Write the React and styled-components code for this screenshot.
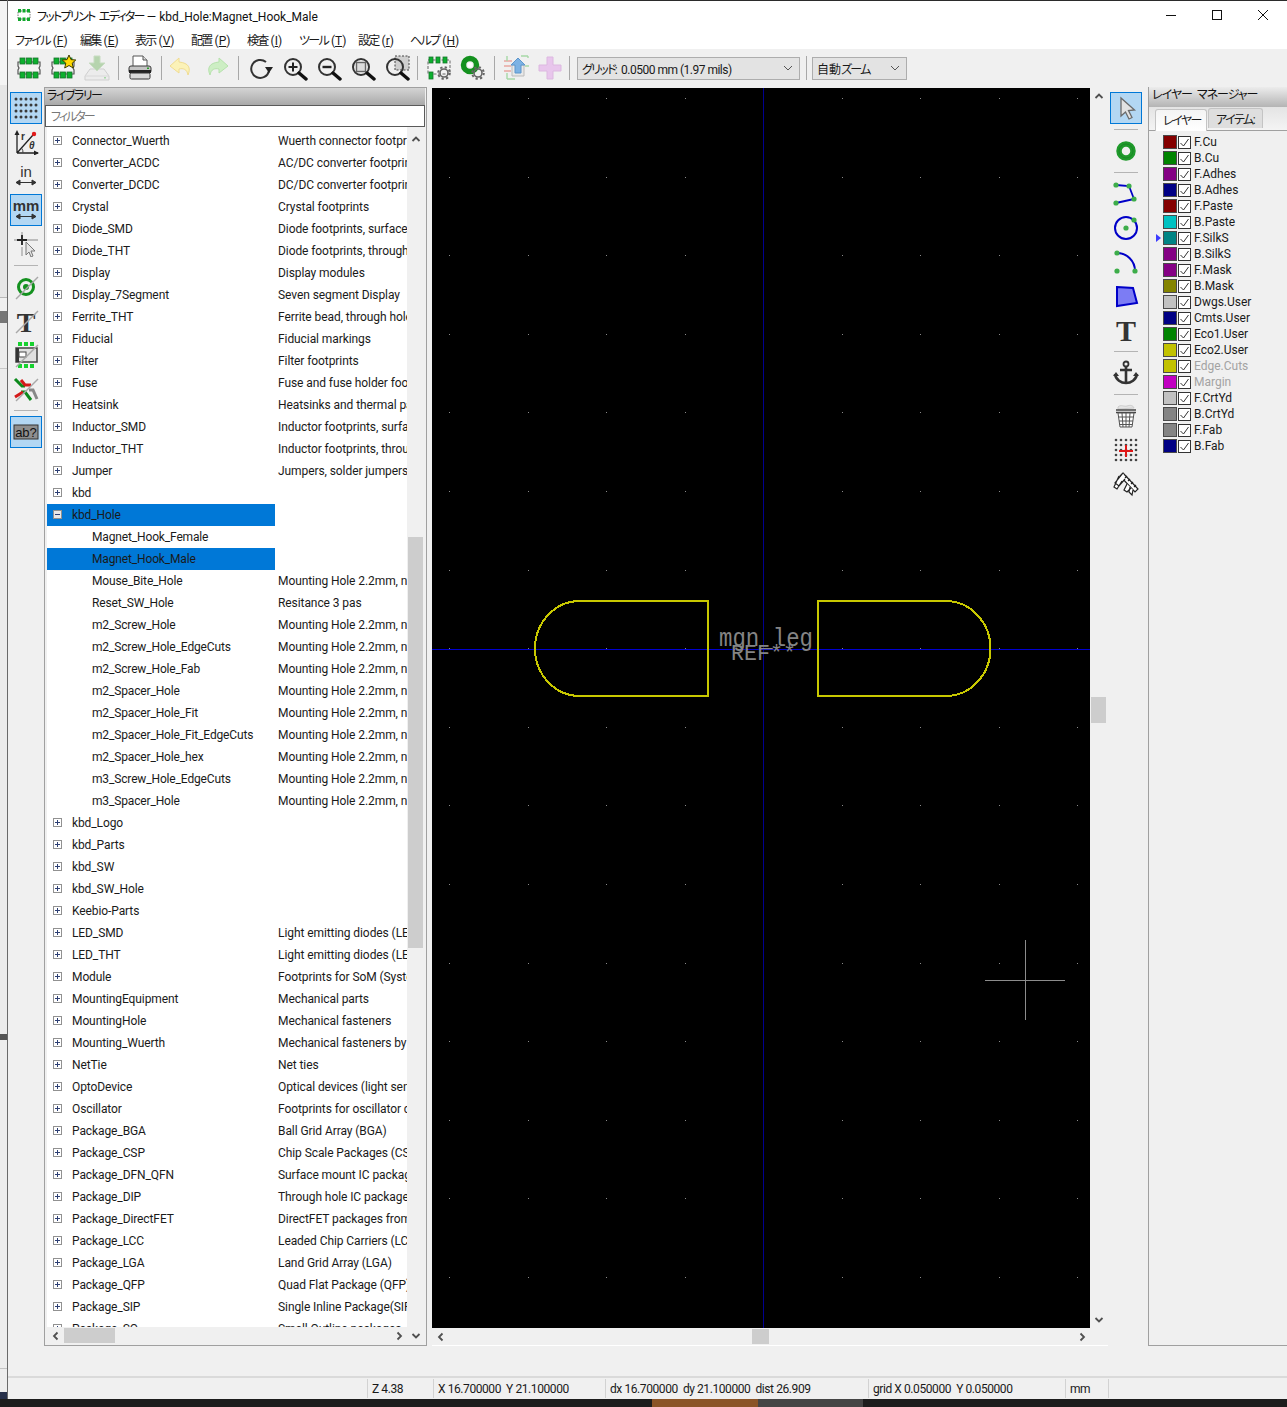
import styled, { createGlobalStyle } from 'styled-components'

const GlobalStyle = createGlobalStyle`
  html, body {
    margin: 0;
    padding: 0;
    background: #1d1d1d;
  }
  body {
    font-family: Roboto, "Noto Sans CJK JP", sans-serif;
    font-size: 12px;
    color: #1a1a1a;
    font-feature-settings: "palt";
  }
  * {
    box-sizing: border-box;
  }
`

//DATA
const LIBRARIES = [
  ['Connector_Wuerth', 'Wuerth connector footprints'],
  ['Converter_ACDC', 'AC/DC converter footprints'],
  ['Converter_DCDC', 'DC/DC converter footprints'],
  ['Crystal', 'Crystal footprints'],
  ['Diode_SMD', 'Diode footprints, surface mount'],
  ['Diode_THT', 'Diode footprints, through hole'],
  ['Display', 'Display modules'],
  ['Display_7Segment', 'Seven segment Display'],
  ['Ferrite_THT', 'Ferrite bead, through hole'],
  ['Fiducial', 'Fiducial markings'],
  ['Filter', 'Filter footprints'],
  ['Fuse', 'Fuse and fuse holder footprints'],
  ['Heatsink', 'Heatsinks and thermal pads'],
  ['Inductor_SMD', 'Inductor footprints, surface mount'],
  ['Inductor_THT', 'Inductor footprints, through hole'],
  ['Jumper', 'Jumpers, solder jumpers, net ties'],
  ['kbd', ''],
  ['kbd_Hole', '', 'open'],
  ['Magnet_Hook_Female', '', 'child'],
  ['Magnet_Hook_Male', '', 'childSelected'],
  ['Mouse_Bite_Hole', 'Mounting Hole 2.2mm, no annular', 'child'],
  ['Reset_SW_Hole', 'Resitance 3 pas', 'child'],
  ['m2_Screw_Hole', 'Mounting Hole 2.2mm, no annular', 'child'],
  ['m2_Screw_Hole_EdgeCuts', 'Mounting Hole 2.2mm, no annular', 'child'],
  ['m2_Screw_Hole_Fab', 'Mounting Hole 2.2mm, no annular', 'child'],
  ['m2_Spacer_Hole', 'Mounting Hole 2.2mm, no annular', 'child'],
  ['m2_Spacer_Hole_Fit', 'Mounting Hole 2.2mm, no annular', 'child'],
  ['m2_Spacer_Hole_Fit_EdgeCuts', 'Mounting Hole 2.2mm, no annular', 'child'],
  ['m2_Spacer_Hole_hex', 'Mounting Hole 2.2mm, no annular', 'child'],
  ['m3_Screw_Hole_EdgeCuts', 'Mounting Hole 2.2mm, no annular', 'child'],
  ['m3_Spacer_Hole', 'Mounting Hole 2.2mm, no annular', 'child'],
  ['kbd_Logo', ''],
  ['kbd_Parts', ''],
  ['kbd_SW', ''],
  ['kbd_SW_Hole', ''],
  ['Keebio-Parts', ''],
  ['LED_SMD', 'Light emitting diodes (LED)'],
  ['LED_THT', 'Light emitting diodes (LED)'],
  ['Module', 'Footprints for SoM (System)'],
  ['MountingEquipment', 'Mechanical parts'],
  ['MountingHole', 'Mechanical fasteners'],
  ['Mounting_Wuerth', 'Mechanical fasteners by Wuerth'],
  ['NetTie', 'Net ties'],
  ['OptoDevice', 'Optical devices (light sensors)'],
  ['Oscillator', 'Footprints for oscillator circuits'],
  ['Package_BGA', 'Ball Grid Array (BGA)'],
  ['Package_CSP', 'Chip Scale Packages (CSP)'],
  ['Package_DFN_QFN', 'Surface mount IC packages'],
  ['Package_DIP', 'Through hole IC packages'],
  ['Package_DirectFET', 'DirectFET packages from IR'],
  ['Package_LCC', 'Leaded Chip Carriers (LCC)'],
  ['Package_LGA', 'Land Grid Array (LGA)'],
  ['Package_QFP', 'Quad Flat Package (QFP)'],
  ['Package_SIP', 'Single Inline Package(SIP)'],
  ['Package_SO', 'Small Outline packages'],
]

const LAYERS = [
  ['F.Cu', '#840000'],
  ['B.Cu', '#008400'],
  ['F.Adhes', '#840084'],
  ['B.Adhes', '#000084'],
  ['F.Paste', '#840000'],
  ['B.Paste', '#00c2c2'],
  ['F.SilkS', '#008484', 'active'],
  ['B.SilkS', '#840084'],
  ['F.Mask', '#840084'],
  ['B.Mask', '#848400'],
  ['Dwgs.User', '#c2c2c2'],
  ['Cmts.User', '#000084'],
  ['Eco1.User', '#008400'],
  ['Eco2.User', '#c2c200'],
  ['Edge.Cuts', '#c2c200', 'dim'],
  ['Margin', '#c200c2', 'dim'],
  ['F.CrtYd', '#c2c2c2'],
  ['B.CrtYd', '#848484'],
  ['F.Fab', '#848484'],
  ['B.Fab', '#000084'],
]

const MENUS = [
  ['ファイル', 'F', 65],
  ['編集', 'E', 55],
  ['表示', 'V', 56],
  ['配置', 'P', 56],
  ['検査', 'I', 52],
  ['ツール', 'T', 59],
  ['設定', 'r', 52],
  ['ヘルプ', 'H', 60],
]

const STATUS = [
  ['', 360],
  ['Z 4.38', 66],
  ['X 16.700000  Y 21.100000', 172],
  ['dx 16.700000  dy 21.100000  dist 26.909', 263],
  ['grid X 0.050000  Y 0.050000', 197],
  ['mm', 43],
]

//STYLES
const Page = styled.div`
  width: 1287px;
  height: 1407px;
  display: grid;
  grid-template-columns: 8px 1fr;
  grid-template-rows: 1399px 8px;
  overflow: hidden;
  background: #1d1d1d;
`
const DesktopEdge = styled.div`
  border-right: 1px solid #6a6a6a;
  background: linear-gradient(
    #2b2b2b 0 1px,
    #f4f4f4 1px 85px,
    #e6e6e6 85px 297px,
    #b8b8b8 297px 298px,
    #f0f0f0 298px 311px,
    #777 311px 323px,
    #ececec 323px 368px,
    #c8c8c8 368px 369px,
    #ececec 369px 1034px,
    #555 1034px 1040px,
    #ededed 1040px 1368px,
    #c4c4c4 1368px 1369px,
    #ededed 1369px 1392px,
    #27304a 1392px
  );
`
const Window = styled.div`
  display: flex;
  flex-direction: column;
  min-width: 0;
  background: #f0f0f0;
  border-top: 1px solid #2b2b2b;
`
const Taskbar = styled.div`
  grid-column: 1 / 3;
  display: flex;
  padding-left: 652px;
  background: #1d1d1d;
`
const TaskItem = styled.div`
  width: ${(p) => p.$w}px;
  background: ${(p) => p.$bg};
`
const Kana = styled.span`
  letter-spacing: ${(p) => p.$ls ?? -1.7}px;
  word-spacing: 3px;
`
const Tight = styled.span`
  margin-left: 2px;
  letter-spacing: -0.5px;
`
const TitleBar = styled.div`
  height: 29px;
  display: flex;
  align-items: center;
  padding: 0 1px 1px 9px;
  background: #fff;
  color: #111;
`
const TitleText = styled.span`
  margin-left: 6px;
  flex: 1;
  white-space: pre;
`
const WindowButton = styled.div`
  width: 46px;
  height: 28px;
  display: flex;
  align-items: center;
  justify-content: center;
`
const MenuBar = styled.div`
  height: 19px;
  display: flex;
  align-items: center;
  padding-left: 7px;
  background: #fff;
`
const MenuItem = styled.div`
  width: ${(p) => p.$w}px;
  white-space: pre;
  u {
    text-underline-offset: 1px;
  }
`
const TopToolbar = styled.div`
  height: 38px;
  display: flex;
  align-items: center;
  padding-left: 4px;
`
const TopButton = styled.div`
  width: 34px;
  height: 32px;
  display: flex;
  align-items: center;
  justify-content: center;
  flex: none;
`
const VSep = styled.div`
  width: 1px;
  height: 24px;
  flex: none;
  background: #a8a8a8;
  margin: 0 ${(p) => p.$r ?? 4}px 0 ${(p) => p.$l ?? 4}px;
`
const Combo = styled.div`
  width: ${(p) => p.$w}px;
  height: 23px;
  flex: none;
  display: flex;
  align-items: center;
  justify-content: space-between;
  padding: 0 6px 0 4px;
  background: #e3e3e3;
  border: 1px solid #adadad;
  white-space: pre;
`
const Body = styled.div`
  height: 1259px;
  display: flex;
`
const ToolStrip = styled.div`
  width: 36px;
  flex: none;
  display: flex;
  flex-direction: column;
  align-items: center;
  gap: 2px;
  padding-top: 5px;
`
const ToolButton = styled.div`
  width: 32px;
  height: 32px;
  flex: none;
  display: flex;
  align-items: center;
  justify-content: center;
  border: 1px solid ${(p) => (p.$active ? '#0078d7' : 'transparent')};
  background: ${(p) => (p.$active ? '#b3d7f3' : 'transparent')};
`
const HSep = styled.div`
  width: 24px;
  height: 1px;
  flex: none;
  background: #b4b4b4;
  margin: 3px 0;
`
const LibraryPanel = styled.div`
  width: 383px;
  height: 1259px;
  flex: none;
  display: flex;
  flex-direction: column;
  padding: 0 1px 1px 0;
  border: 1px solid #a0a0a0;
`
const PanelTitle = styled.div`
  height: ${(p) => p.$h}px;
  flex: none;
  display: flex;
  align-items: center;
  padding: 0 0 ${(p) => p.$pb ?? 4}px ${(p) => p.$pl ?? 2}px;
  background: linear-gradient(#d4d4d4, #a9a9a9);
  color: #111;
  white-space: pre;
`
const FilterInput = styled.div`
  height: 22px;
  flex: none;
  display: flex;
  align-items: center;
  padding: 0 0 1px 5px;
  background: #fff;
  border: 1px solid #5a5a5a;
  color: #777;
`
const TreeArea = styled.div`
  flex: 1;
  min-height: 0;
  display: flex;
  padding-left: 2px;
`
const TreeColumn = styled.div`
  width: 360px;
  height: 100%;
  display: flex;
  flex-direction: column;
`
const Tree = styled.div`
  flex: 1;
  min-height: 0;
  overflow: hidden;
  padding-top: 3px;
  background: #fff;
`
const TreeRow = styled.div`
  height: 22px;
  display: flex;
  align-items: center;
`
const NameCell = styled.div`
  width: 228px;
  height: 22px;
  flex: none;
  display: flex;
  align-items: center;
  padding: 0 0 1px ${(p) => (p.$child ? 45 : 6)}px;
  letter-spacing: ${(p) => (p.$child ? -0.15 : -0.1)}px;
  background: ${(p) => (p.$selected ? '#0078d7' : 'transparent')};
  white-space: nowrap;
`
const DescCell = styled.div`
  width: 132px;
  padding: 0 0 1px 3px;
  letter-spacing: -0.08px;
  overflow: hidden;
  white-space: nowrap;
`
const Expander = styled.span`
  width: 9px;
  height: 9px;
  flex: none;
  margin-right: 10px;
  display: flex;
  align-items: center;
  justify-content: center;
  background: ${(p) => (p.$open ? '#e8e8e8' : '#fff')};
  border: 1px solid #919191;
  &::before {
    content: '';
    width: 5px;
    height: 1px;
    background: #2d3f74;
  }
  &::after {
    content: '';
    display: ${(p) => (p.$open ? 'none' : 'block')};
    width: 1px;
    height: 5px;
    margin-left: -3px;
    margin-right: 2px;
    background: #2d3f74;
  }
`
const VScroll = styled.div`
  width: 17px;
  flex: none;
  display: flex;
  flex-direction: column;
  padding-top: ${(p) => p.$top ?? 0}px;
  background: #f0f0f0;
`
const HScroll = styled.div`
  height: 17px;
  flex: none;
  display: flex;
  background: #f0f0f0;
`
const ArrowBox = styled.div`
  width: 17px;
  height: 17px;
  flex: none;
  display: flex;
  align-items: center;
  justify-content: center;
`
const VTrack = styled.div`
  flex: 1;
  min-height: 0;
  padding: ${(p) => p.$offset}px 1px 0;
`
const VThumb = styled.div`
  height: ${(p) => p.$size}px;
  background: #cdcdcd;
`
const HTrack = styled.div`
  flex: 1;
  min-width: 0;
  padding: 1px 0 1px ${(p) => p.$offset}px;
`
const HThumb = styled.div`
  width: ${(p) => p.$size}px;
  height: 100%;
  background: #cdcdcd;
`
const CanvasArea = styled.div`
  width: 676px;
  flex: none;
  margin-left: 5px;
  padding-top: 1px;
  height: 1259px;
  display: grid;
  grid-template-columns: 658px 18px;
  grid-template-rows: 1240px 17px;
  border-bottom: 1px solid #fff;
`
const CanvasSvg = styled.svg`
  display: block;
  background: #000;
`
const LayerPanel = styled.div`
  width: 139px;
  flex: none;
  margin-left: 4px;
  height: 1259px;
  display: flex;
  flex-direction: column;
  border-left: 1px solid #a0a0a0;
  border-bottom: 1px solid #a0a0a0;
`
const LayerTitle = styled(PanelTitle)`
  background: linear-gradient(#ececec, #b4b4b4);
`
const TabBar = styled.div`
  height: 24px;
  flex: none;
  display: flex;
  align-items: flex-end;
  padding-left: 6px;
  border-bottom: 1px solid #a0a0a0;
  background: linear-gradient(#e4e4e4, #f4f4f4);
`
const Tab = styled.div`
  width: ${(p) => p.$w}px;
  height: ${(p) => (p.$active ? 22 : 20)}px;
  display: flex;
  align-items: center;
  padding: 0 0 ${(p) => (p.$active ? 3 : 0)}px 7px;
  margin-right: 1px;
  margin-bottom: ${(p) => (p.$active ? -1 : 2)}px;
  border: 1px solid #c4c4c4;
  border-bottom: none;
  border-radius: 3px 3px 0 0;
  white-space: nowrap;
  background: ${(p) => (p.$active ? 'linear-gradient(#f4f4f4, #fff)' : '#dedede')};
`
const LayerList = styled.div`
  padding-top: 3px;
`
const LayerRow = styled.div`
  height: 16px;
  display: flex;
  align-items: center;
  padding-left: 7px;
  color: ${(p) => (p.$dim ? '#a3a3a3' : '#1a1a1a')};
`
const Marker = styled.span`
  width: 7px;
  flex: none;
  height: 0;
  border-left: 5px solid ${(p) => (p.$on ? '#3b3bff' : 'transparent')};
  border-top: 4px solid transparent;
  border-bottom: 4px solid transparent;
`
const Swatch = styled.span`
  width: 14px;
  height: 14px;
  flex: none;
  background: ${(p) => p.$color};
  border: 1px solid #4a4a4a;
`
const CheckBox = styled.span`
  width: 13px;
  height: 13px;
  flex: none;
  margin: 0 3px 0 1px;
  display: flex;
  align-items: center;
  justify-content: center;
  background: #fff;
  border: 1px solid #333;
`
const BlankBand = styled.div`
  height: 30px;
`
const StatusBar = styled.div`
  height: 23px;
  display: flex;
  border-top: 2px solid #dadada;
`
const StatusCell = styled.div`
  width: ${(p) => p.$w}px;
  flex: none;
  display: flex;
  align-items: center;
  padding-left: 4px;
  letter-spacing: -0.42px;
  white-space: pre;
  border-right: 1px solid #d2d2d2;
  margin: 1px 0;
`

//ICONS
const Ico = ({ size = 26, children }) => (
  <svg width={size} height={size} viewBox="0 0 26 26">
    {children}
  </svg>
)

const Pad = ({ x, y, w = 5, h = 6 }) => (
  <rect x={x} y={y} width={w} height={h} fill="#0cb02e" stroke="#17742c" strokeWidth="0.8" />
)

const Footprint = () => (
  <>
    <path d="M2 7h22v4l-1 2 1 2v4H2v-4l1-2-1-2z" fill="#f4f4f4" stroke="#555" strokeWidth="1.2" />
    {[4, 10.5, 17].map((x) => (
      <g key={x}>
        <Pad x={x} y={3} />
        <Pad x={x} y={17} />
      </g>
    ))}
  </>
)

const Gear = ({ x, y }) => (
  <g fill="none" stroke="#666">
    <circle cx={x} cy={y} r="4" strokeWidth="1.6" />
    <circle cx={x} cy={y} r="5.8" strokeWidth="2" strokeDasharray="2.3 2.25" />
  </g>
)

const Magnifier = ({ children }) => (
  <g transform="translate(-1 0)">
    <circle cx="11" cy="12" r="8" fill="none" stroke="#333" strokeWidth="2" />
    <path d="M17 18l7 6" stroke="#111" strokeWidth="3.4" strokeLinecap="round" />
    {children}
  </g>
)

const Slash = () => <path d="M3 25L25 3" stroke="#a8a8a8" strokeWidth="1.4" />

const FootprintIcon = () => (
  <Ico>
    <Footprint />
  </Ico>
)
const FootprintNewIcon = () => (
  <Ico>
    <Footprint />
    <path
      d="M19 0l2 4.6 4.8.4-3.6 3.2 1.1 4.8-4.3-2.5-4.300 2.500 1.100-4.800L12.200 5l4.800-.4z"
      fill="#ffd800"
      stroke="#3d3d00"
      strokeWidth="1"
    />
  </Ico>
)
const ImportIcon = () => (
  <Ico>
    <path d="M6 14h14l5 7v4H1v-4z" fill="#ececec" stroke="#cfcfcf" />
    <path d="M1 21h24" stroke="#d8d8d8" />
    <rect x="20" y="22" width="2" height="1.500" fill="#a8d8a8" />
    <path d="M10 1h6v7h5l-8 8-8-8h5z" fill="#b6d4ae" stroke="#c8dcc2" />
  </Ico>
)
const PrintIcon = () => (
  <Ico>
    <path d="M6 1h10l4 4v7H6z" fill="#fff" stroke="#555" />
    <path d="M16 1v4h4" fill="#ddd" stroke="#555" />
    <rect x="2" y="11" width="22" height="7" rx="2" fill="#c4c4c4" stroke="#3a3a3a" />
    <rect x="2" y="15" width="22" height="3" fill="#222" />
    <rect x="3" y="18" width="20" height="6" rx="1.500" fill="#d8d8d8" stroke="#333" />
    <rect x="20" y="12.500" width="2" height="1.500" fill="#2a9d2a" />
  </Ico>
)
const UndoIcon = () => (
  <Ico>
    <g transform="translate(-2 0)">
      <path d="M11 3L2 11l9 7v-4c4-1 8 0 9 6 3-7 1-12-9-13z" fill="#fbf2b8" stroke="#f0dc90" strokeWidth="1" />
    </g>
  </Ico>
)
const RedoIcon = () => (
  <Ico>
    <path d="M15 3l9 8-9 7v-4c-4-1-8 0-9 6-3-7-1-12 9-13z" fill="#cdeec4" stroke="#b6e2ac" strokeWidth="1" />
  </Ico>
)
const RefreshIcon = () => (
  <Ico>
    <g transform="translate(-2 0)">
      <path d="M19 7A9 9 0 1 0 22 16" fill="none" stroke="#333" strokeWidth="2" />
      <path d="M18 12h8l-4 6z" fill="#222" />
    </g>
  </Ico>
)
const ZoomInIcon = () => (
  <Ico>
    <Magnifier>
      <path d="M6.500 12h9M11 7.500v9" stroke="#222" strokeWidth="2" />
    </Magnifier>
  </Ico>
)
const ZoomOutIcon = () => (
  <Ico>
    <Magnifier>
      <path d="M6.500 12h9" stroke="#222" strokeWidth="2.400" />
    </Magnifier>
  </Ico>
)
const ZoomFitIcon = () => (
  <Ico>
    <Magnifier>
      <rect x="6.500" y="7.500" width="9" height="9" fill="#ddd" stroke="#666" strokeWidth="1.400" />
    </Magnifier>
  </Ico>
)
const ZoomAreaIcon = () => (
  <Ico>
    <rect x="10" y="1" width="14" height="14" fill="#cfcfcf" stroke="#444" strokeDasharray="2 1.500" />
    <Magnifier />
  </Ico>
)
const FootprintGearIcon = () => (
  <Ico>
    <path d="M2 5h22v14H2z" fill="#f4f4f4" stroke="#666" strokeDasharray="3 1.500" />
    <Pad x={3} y={2} w={4} h={6} />
    <Pad x={10} y={2} w={4} h={6} />
    <Pad x={17} y={2} w={4} h={6} />
    <Pad x={3} y={17} w={4} h={7} />
    <Gear x={18} y={18} />
  </Ico>
)
const PadGearIcon = () => (
  <Ico>
    <circle cx="10" cy="10" r="6.500" fill="none" stroke="#14911f" strokeWidth="5.500" />
    <circle cx="10" cy="10" r="2.500" fill="#fff" />
    <Gear x={18} y={18} />
  </Ico>
)
const UpdateIcon = () => (
  <Ico>
    <path d="M1 6h8M1 11h7M1 16h7" stroke="#e8a6a0" strokeWidth="1.400" />
    <path d="M4 1v5M18 1h7M25 1v2M4 24V18M4 24h8M22 11h4" stroke="#a6d8a6" strokeWidth="1.400" />
    <path d="M9 10h12v11H9z" fill="#e8e8e8" stroke="#bbb" />
    <path d="M15 3l7 7h-4v8h-6v-8H8z" fill="#7cb2e4" stroke="#5d96cc" />
  </Ico>
)
const PlusIcon = () => (
  <Ico>
    <path d="M10 2h6v8h8v6h-8v8h-6v-8H2v-6h8z" fill="#e8c6ec" stroke="#dcb8e0" />
  </Ico>
)
const GridIcon = () => (
  <Ico>
    {[3, 8, 13, 18, 23].map((x) =>
      [4, 10, 16, 22].map((y) => <circle key={`${x}-${y}`} cx={x} cy={y} r="1.500" fill="#3a3a3a" />),
    )}
  </Ico>
)
const PolarIcon = () => (
  <Ico>
    <path d="M4 24h21M4 24V4M4 24L20 6" stroke="#222" strokeWidth="1.300" fill="none" />
    <path d="M4 1l-2.500 5h5zM26 24l-5-2.500v5z" fill="#222" />
    <circle cx="21" cy="5" r="2.200" fill="#e21b1b" />
    <path d="M10 24a7 7 0 0 0-1.500-5" stroke="#444" fill="none" />
    <text x="8" y="11" fontFamily="Liberation Sans" fontSize="10" fontWeight="700" fill="#333">
      r
    </text>
    <text x="16" y="20" fontFamily="Liberation Sans" fontSize="10" fontStyle="italic" fontWeight="700" fill="#333">
      θ
    </text>
  </Ico>
)
const UnitArrow = () => (
  <path d="M3 19.500h20M3 19.500l4-2.500v5zM23 19.500l-4-2.500v5z" stroke="#333" strokeWidth="1" fill="#333" />
)
const InchIcon = () => (
  <Ico>
    <text x="13" y="14" textAnchor="middle" fontFamily="Liberation Sans" fontSize="15" fill="#333">
      in
    </text>
    <UnitArrow />
  </Ico>
)
const MmIcon = () => (
  <Ico>
    <text x="13" y="14" textAnchor="middle" fontFamily="Liberation Sans" fontSize="15" fontWeight="700" fill="#333">
      mm
    </text>
    <UnitArrow />
  </Ico>
)
const CrossCursorIcon = () => (
  <Ico>
    <path d="M1 9h24M9 1v12" stroke="#aaa" strokeWidth="1.400" />
    <path d="M4 9h10M9 4v10" stroke="#222" strokeWidth="1.800" />
    <path d="M9 16v9" stroke="#aaa" strokeWidth="1.400" />
    <path d="M13 11v13l3-3 2 5 2-1-2-5h4z" fill="#e6e6e6" stroke="#777" />
  </Ico>
)
const PadOffIcon = () => (
  <Ico>
    <circle cx="13" cy="13" r="7.500" fill="none" stroke="#14911f" strokeWidth="3" />
    <circle cx="13" cy="13" r="3" fill="#14911f" />
    <Slash />
  </Ico>
)
const SerifT = ({ size, x, y }) => (
  <text x={x} y={y} textAnchor="middle" fontFamily="Liberation Serif" fontSize={size} fontWeight="700" fill="#333">
    T
  </text>
)
const TextOffIcon = () => (
  <Ico>
    <SerifT size={28} x={13} y={24} />
    <Slash />
  </Ico>
)
const ModuleOffIcon = () => (
  <Ico>
    {[5, 11, 17].map((x) => (
      <g key={x}>
        <rect x={x} y="0" width="4" height="4" fill="#17d12f" />
        <rect x={x} y="22" width="4" height="4" fill="#17d12f" />
      </g>
    ))}
    <rect x="3" y="6" width="21" height="14" fill="#e0e0e0" stroke="#444" strokeWidth="1.500" />
    <path d="M3 6h3v14H3z" fill="#333" />
    <rect x="6" y="10" width="7" height="5" fill="#fff" stroke="#444" />
    <Slash />
  </Ico>
)
const TracksOffIcon = () => (
  <Ico>
    <path d="M2 3l7 7h3M8 16h4l6 8" fill="none" stroke="#0c8a1c" strokeWidth="3" />
    <path d="M8 4l4 5h6M2 21l8-5" fill="none" stroke="#d41a1a" strokeWidth="3" />
    <path d="M16 14h4l4 9" fill="none" stroke="#888" strokeWidth="3" />
    <Slash />
  </Ico>
)
const LabelIcon = () => (
  <Ico>
    <rect x="1" y="6" width="24" height="14" fill="#8e8e8e" stroke="#333" />
    <text x="13" y="17.500" textAnchor="middle" fontFamily="Liberation Sans" fontSize="13" fill="#111">
      ab?
    </text>
  </Ico>
)
const ArrowIcon = () => (
  <Ico>
    <path d="M8 3v18l4.500-4 3.500 7 3-1.500-3.500-7 6-.5z" fill="#e2e2e2" stroke="#6a6a6a" strokeWidth="1.300" />
  </Ico>
)
const PadIcon = () => (
  <Ico>
    <circle cx="13" cy="13" r="7" fill="none" stroke="#1f9a2b" strokeWidth="5.500" />
    <circle cx="13" cy="13" r="7" fill="none" stroke="#147a20" strokeWidth="0.600" />
    <circle cx="13" cy="13" r="2.500" fill="#f0f0f0" />
  </Ico>
)
const Node = ({ x, y }) => <circle cx={x} cy={y} r="2.600" fill="#3dad4a" />
const SegmentIcon = () => (
  <Ico>
    <path d="M3 4l13 1 5 13-18 4" fill="none" stroke="#0000c8" strokeWidth="1.800" />
    <Node x={3} y={4} />
    <Node x={16} y={5} />
    <Node x={21} y={18} />
    <Node x={3} y={22} />
  </Ico>
)
const CircleIcon = () => (
  <Ico>
    <circle cx="13" cy="13" r="11" fill="none" stroke="#0000c8" strokeWidth="2" />
    <Node x={13} y={13} />
    <Node x={21} y={5} />
  </Ico>
)
const ArcIcon = () => (
  <Ico>
    <path d="M4 4c10 0 18 8 18 18" fill="none" stroke="#0000c8" strokeWidth="2" />
    <Node x={4} y={4} />
    <Node x={4} y={22} />
    <Node x={22} y={22} />
  </Ico>
)
const PolygonIcon = () => (
  <Ico>
    <path d="M4 4l16 1 4 15-20 3z" fill="#7c7cf4" stroke="#0000c8" strokeWidth="2" />
  </Ico>
)
const BigTIcon = () => (
  <Ico>
    <SerifT size={30} x={13} y={24} />
  </Ico>
)
const AnchorIcon = () => (
  <Ico>
    <circle cx="13" cy="4" r="2.500" fill="none" stroke="#333" strokeWidth="1.800" />
    <path d="M13 6v17M7 10h12" stroke="#333" strokeWidth="2.600" />
    <path d="M2 14c1 6 6 9 11 9s10-3 11-9" fill="none" stroke="#333" strokeWidth="2.600" />
    <path d="M0 16l3-4 3 4zM20 16l3-4 3 4z" fill="#333" />
  </Ico>
)
const TrashIcon = () => (
  <Ico>
    <path d="M5 4c3-3 6 0 9-1s6-1 7 2l-16 1z" fill="#e4e4e4" stroke="#ccc" />
    <path d="M3 7h20M3 9.500h20" stroke="#444" strokeWidth="1.400" />
    <path
      d="M5 10l2 14h12l2-14zM5.500 14h15M6 18h14M6.500 21.500h13M9 10l1 14M13 10v14M17 10l-1 14"
      fill="#fff"
      stroke="#555"
    />
  </Ico>
)
const OriginIcon = () => (
  <Ico>
    {[3, 8, 13, 18, 23].map((x) =>
      [3, 8, 13, 18, 23].map((y) => <circle key={`${x}-${y}`} cx={x} cy={y} r="1.300" fill="#444" />),
    )}
    <path d="M6 14h14M13 8v12" stroke="#e01818" strokeWidth="2" />
  </Ico>
)
const CaliperIcon = () => (
  <Ico>
    <g stroke="#222" strokeWidth="1.200">
      <path d="M10 2L25 18l-3 3L7 5z" fill="#fff" />
      <path d="M10 2L2 12l4 3 6-7M6 5L1 16l3 2 5-8" fill="#fff" />
      <path d="M14 13l-3 6 3 2 4-4M17 16l-1 5 3 3 1-5" fill="#fff" />
      <path d="M12 7l2-2M15 10l2-2M18 13l2-2M21 16l2-2" />
    </g>
  </Ico>
)
const AppIcon = () => (
  <svg width="14" height="14" viewBox="0 0 14 14">
    <rect x="1" y="3" width="12" height="8" fill="none" stroke="#777" strokeDasharray="1.500 1" />
    {[1, 5.500, 10].map((x) => (
      <g key={x}>
        <rect x={x} y="1" width="3" height="3.500" fill="#12a82c" />
        <rect x={x} y="9.500" width="3" height="3.500" fill="#12a82c" />
      </g>
    ))}
  </svg>
)
const Chevron = ({ dir }) => {
  const paths = {
    up: 'M1.500 6L5 2.500 8.500 6',
    down: 'M1.500 3L5 6.500 8.500 3',
    left: 'M6.500 1.500L3 5l3.500 3.500',
    right: 'M3.500 1.500L7 5 3.500 8.500',
  }
  return (
    <svg width="10" height="10" viewBox="0 0 10 10">
      <path d={paths[dir]} fill="none" stroke="#505050" strokeWidth="1.800" />
    </svg>
  )
}
const ComboArrow = () => (
  <svg width="10" height="6" viewBox="0 0 10 6">
    <path d="M1 1l4 4 4-4" fill="none" stroke="#555" strokeWidth="1" />
  </svg>
)

//CANVAS
const range = (from, to, step) => {
  const out = []
  for (let v = from; v <= to; v += step) out.push(v)
  return out
}

const PcbCanvas = () => (
  <CanvasSvg width="658" height="1240" viewBox="432 88 658 1240">
    {range(449, 1085, 78.5).map((x) =>
      range(98, 1325, 78.6).map((y) => (
        <rect key={`${x}-${y}`} x={Math.round(x)} y={Math.round(y)} width="1" height="1" fill="#8a8a8a" />
      )),
    )}
    <rect x="763" y="88" width="1" height="1240" fill="#000090" />
    <rect x="432" y="649" width="658" height="1" fill="#0000d0" />
    <path
      d="M580 601H708V696H580A45 47.500 0 0 1 580 601ZM945.500 601H818V696H945.500A45 47.500 0 0 0 945.500 601Z"
      fill="none"
      stroke="#c8c800"
      strokeWidth="2"
      shapeRendering="crispEdges"
    />
    <text x="719" y="646" fontFamily="Liberation Mono" fontSize="25" fill="#848484" textLength="94" lengthAdjust="spacingAndGlyphs">
      mgn_leg
    </text>
    <text x="731" y="660" fontFamily="Liberation Mono" fontSize="22" fill="#848484" textLength="65" lengthAdjust="spacingAndGlyphs">
      REF**
    </text>
    <path d="M985 980.500H1065M1025.500 940V1020" stroke="#8c8c8c" fill="none" />
  </CanvasSvg>
)

//PARTS
const VBar = ({ top, offset, size }) => (
  <VScroll $top={top}>
    <ArrowBox>
      <Chevron dir="up" />
    </ArrowBox>
    <VTrack $offset={offset}>
      <VThumb $size={size} />
    </VTrack>
    <ArrowBox>
      <Chevron dir="down" />
    </ArrowBox>
  </VScroll>
)

const HBar = ({ offset, size }) => (
  <HScroll>
    <ArrowBox>
      <Chevron dir="left" />
    </ArrowBox>
    <HTrack $offset={offset}>
      <HThumb $size={size} />
    </HTrack>
    <ArrowBox>
      <Chevron dir="right" />
    </ArrowBox>
  </HScroll>
)

const LibraryRow = ({ name, desc, kind }) => {
  const isChild = kind === 'child' || kind === 'childSelected'
  return (
    <TreeRow>
      <NameCell $child={isChild} $selected={kind === 'open' || kind === 'childSelected'}>
        {!isChild && <Expander $open={kind === 'open'} />}
        {name}
      </NameCell>
      <DescCell>{desc}</DescCell>
    </TreeRow>
  )
}

function App() {
  return (
    <Page>
      <GlobalStyle />
      <DesktopEdge />
      <Window>
        <TitleBar>
          <AppIcon />
          <TitleText>
            <Kana>フットプリント エディター</Kana> — kbd_Hole:Magnet_Hook_Male
          </TitleText>
          <WindowButton>
            <svg width="10" height="10" viewBox="0 0 10 10">
              <path d="M0 5.500h10" stroke="#111" />
            </svg>
          </WindowButton>
          <WindowButton>
            <svg width="10" height="10" viewBox="0 0 10 10">
              <rect x="0.500" y="0.500" width="9" height="9" fill="none" stroke="#111" />
            </svg>
          </WindowButton>
          <WindowButton>
            <svg width="10" height="10" viewBox="0 0 10 10">
              <path d="M0 0l10 10M10 0L0 10" stroke="#111" />
            </svg>
          </WindowButton>
        </TitleBar>
        <MenuBar>
          {MENUS.map(([label, key, width]) => (
            <MenuItem key={key} $w={width}>
              <Kana>{label}</Kana> (<u>{key}</u>)
            </MenuItem>
          ))}
        </MenuBar>
        <TopToolbar>
          <TopButton><FootprintIcon /></TopButton>
          <TopButton><FootprintNewIcon /></TopButton>
          <TopButton><ImportIcon /></TopButton>
          <VSep />
          <TopButton><PrintIcon /></TopButton>
          <VSep />
          <TopButton><UndoIcon /></TopButton>
          <TopButton><RedoIcon /></TopButton>
          <VSep $r={6} />
          <TopButton><RefreshIcon /></TopButton>
          <TopButton><ZoomInIcon /></TopButton>
          <TopButton><ZoomOutIcon /></TopButton>
          <TopButton><ZoomFitIcon /></TopButton>
          <TopButton><ZoomAreaIcon /></TopButton>
          <VSep $l={2} />
          <TopButton><FootprintGearIcon /></TopButton>
          <TopButton><PadGearIcon /></TopButton>
          <VSep />
          <TopButton><UpdateIcon /></TopButton>
          <TopButton><PlusIcon /></TopButton>
          <VSep $l={2} $r={7} />
          <Combo $w={223}>
            <span>
              <Kana>グリッド:</Kana> <Tight>0.0500 mm (1.97 mils)</Tight>
            </span>
            <ComboArrow />
          </Combo>
          <VSep $l={6} $r={5} />
          <Combo $w={95}>
            <span>
              自動<Kana>ズーム</Kana>
            </span>
            <ComboArrow />
          </Combo>
        </TopToolbar>
        <Body>
          <ToolStrip>
            <ToolButton $active><GridIcon /></ToolButton>
            <ToolButton><PolarIcon /></ToolButton>
            <ToolButton><InchIcon /></ToolButton>
            <ToolButton $active><MmIcon /></ToolButton>
            <ToolButton><CrossCursorIcon /></ToolButton>
            <HSep />
            <ToolButton><PadOffIcon /></ToolButton>
            <ToolButton><TextOffIcon /></ToolButton>
            <ToolButton><ModuleOffIcon /></ToolButton>
            <ToolButton><TracksOffIcon /></ToolButton>
            <HSep />
            <ToolButton $active><LabelIcon /></ToolButton>
          </ToolStrip>
          <LibraryPanel>
            <PanelTitle $h={17}>
              <Kana $ls={-1.5}>ライブラリー</Kana>
            </PanelTitle>
            <FilterInput>
              <Kana $ls={-2}>フィルター</Kana>
            </FilterInput>
            <TreeArea>
              <TreeColumn>
                <Tree>
                  {LIBRARIES.map(([name, desc, kind]) => (
                    <LibraryRow key={name} name={name} desc={desc} kind={kind} />
                  ))}
                </Tree>
                <HBar offset={0} size={51} />
              </TreeColumn>
              <VBar top={4} offset={389} size={411} />
            </TreeArea>
          </LibraryPanel>
          <CanvasArea>
            <PcbCanvas />
            <VBar offset={592} size={26} />
            <HBar offset={303} size={17} />
          </CanvasArea>
          <ToolStrip>
            <ToolButton $active><ArrowIcon /></ToolButton>
            <HSep />
            <ToolButton><PadIcon /></ToolButton>
            <HSep />
            <ToolButton><SegmentIcon /></ToolButton>
            <ToolButton><CircleIcon /></ToolButton>
            <ToolButton><ArcIcon /></ToolButton>
            <ToolButton><PolygonIcon /></ToolButton>
            <ToolButton><BigTIcon /></ToolButton>
            <HSep />
            <ToolButton><AnchorIcon /></ToolButton>
            <HSep />
            <ToolButton><TrashIcon /></ToolButton>
            <ToolButton><OriginIcon /></ToolButton>
            <ToolButton><CaliperIcon /></ToolButton>
          </ToolStrip>
          <LayerPanel>
            <LayerTitle $h={20} $pb={7} $pl={3}>
              <Kana $ls={-1}>レイヤー マネージャー</Kana>
            </LayerTitle>
            <TabBar>
              <Tab $active $w={52}>
                <Kana $ls={-1.5}>レイヤー</Kana>
              </Tab>
              <Tab $w={55}>
                <Kana $ls={-1.5}>アイテム:</Kana>
              </Tab>
            </TabBar>
            <LayerList>
              {LAYERS.map(([name, color, state]) => (
                <LayerRow key={name} $dim={state === 'dim'}>
                  <Marker $on={state === 'active'} />
                  <Swatch $color={color} />
                  <CheckBox>
                    <svg width="11" height="11" viewBox="0 0 11 11">
                      <path d="M1.500 6l3 3 5-7" fill="none" stroke="#333" strokeWidth="1" />
                    </svg>
                  </CheckBox>
                  {name}
                </LayerRow>
              ))}
            </LayerList>
          </LayerPanel>
        </Body>
        <BlankBand />
        <StatusBar>
          {STATUS.map(([text, width]) => (
            <StatusCell key={width} $w={width}>
              {text}
            </StatusCell>
          ))}
        </StatusBar>
      </Window>
      <Taskbar>
        <TaskItem $w={106} $bg="#8b5427" />
        <TaskItem $w={105} $bg="#454545" />
      </Taskbar>
    </Page>
  )
}

export default App
